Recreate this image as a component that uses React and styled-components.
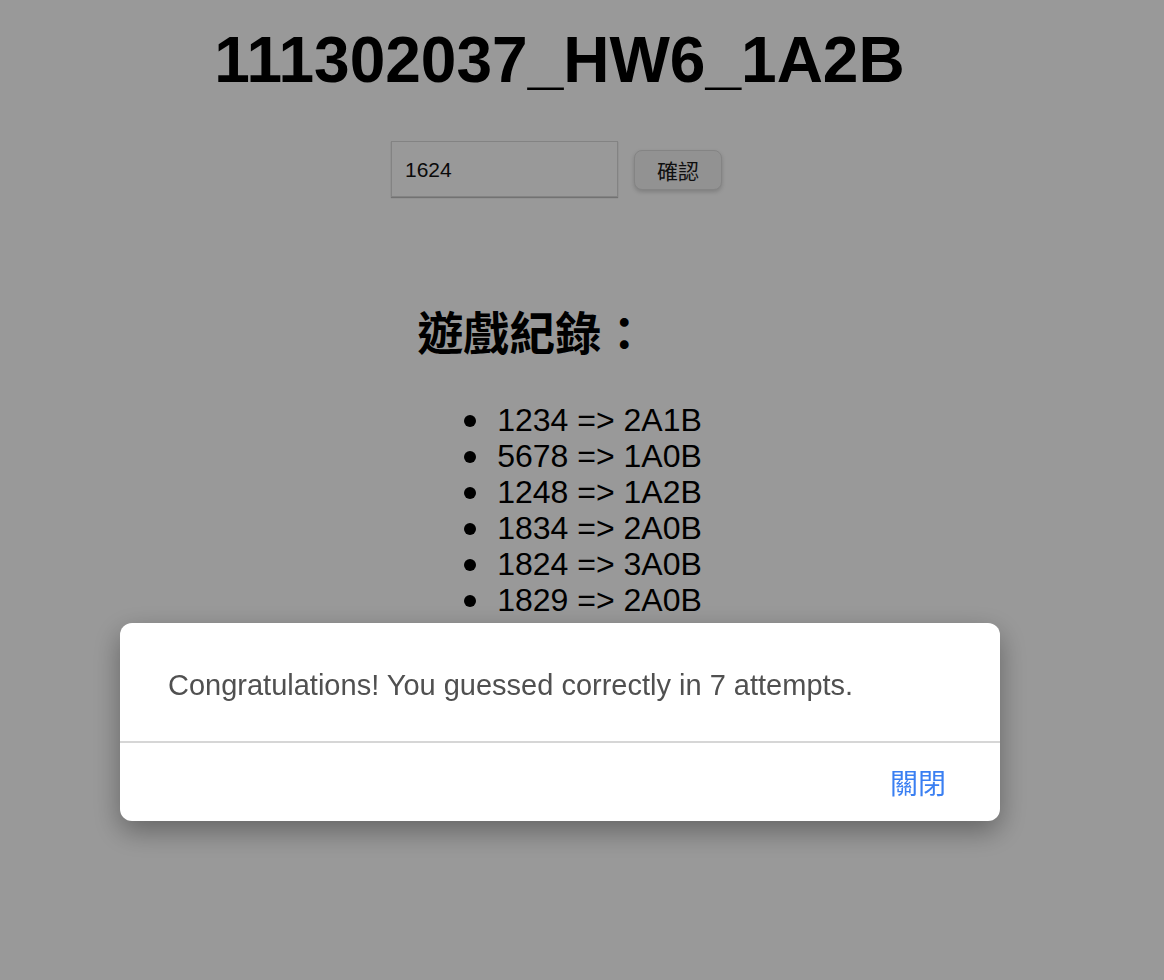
import React, { useState } from "react";
import styled, { createGlobalStyle } from "styled-components";

const Global = createGlobalStyle`
  html, body { margin: 0; padding: 0; background: #ffffff; }
  body { font-family: "Liberation Sans", Arial, "Noto Sans CJK TC", sans-serif; color: #000; }
`;

const Page = styled.div`
  width: 1119px;
  text-align: center;
  padding-top: 23px;
  min-height: 980px;
  box-sizing: border-box;
`;

const Title = styled.h1`
  margin: 0;
  font-size: 64px;
  line-height: 74px;
  font-weight: 700;
`;

const Form = styled.form`
  margin-top: 44px;
  display: flex;
  justify-content: center;
  align-items: center;
  gap: 16px;
  padding-right: 6px;
`;

const Input = styled.input`
  width: 227px;
  height: 56px;
  box-sizing: border-box;
  padding: 2px 13px 0;
  font-family: "Liberation Sans", Arial, sans-serif;
  font-size: 21px;
  color: #111;
  background: #fff;
  border: 1px solid #dadada;
  box-shadow: 0 1px 1px rgba(0, 0, 0, 0.25);
  outline: none;
`;

const Button = styled.button`
  width: 88px;
  height: 40px;
  border-radius: 8px;
  border: 1px solid #dcdcdc;
  background: #f4f4f4;
  box-shadow: 0 2px 4px rgba(0, 0, 0, 0.18);
  font-family: "Noto Sans CJK TC", sans-serif;
  font-size: 21px;
  line-height: 1;
  color: #1a1a1a;
  margin-top: 2px;
`;

const Records = styled.div`
  display: inline-block;
  text-align: left;
  margin-top: 105px;
`;

const RecordsTitle = styled.h2`
  margin: 0;
  font-family: "Noto Sans CJK TC", sans-serif;
  font-size: 46px;
  line-height: 56px;
  font-weight: 700;
`;

const List = styled.ul`
  margin: 44px 0 0;
  padding-left: 47px;
  list-style: none;
`;

const Item = styled.li`
  display: flex;
  align-items: center;
  gap: 21px;
  font-size: 32px;
  line-height: 36px;

  &::before {
    content: "";
    width: 12px;
    height: 12px;
    border-radius: 50%;
    background: #000;
    flex: none;
    margin-top: 2px;
  }
`;

const Backdrop = styled.div`
  position: fixed;
  inset: 0;
  background: rgba(0, 0, 0, 0.4);
`;

const Dialog = styled.div`
  position: fixed;
  left: 120px;
  top: 623px;
  width: 880px;
  background: #fff;
  border-radius: 12px;
  box-shadow: 0 10px 28px rgba(0, 0, 0, 0.35);
  display: flex;
  flex-direction: column;
  overflow: hidden;
`;

const DialogBody = styled.div`
  height: 120px;
  box-sizing: border-box;
  display: flex;
  align-items: center;
  padding: 6px 48px 0;
  font-family: "Liberation Sans", Arial, sans-serif;
  font-size: 29px;
  color: #505050;
  border-bottom: 2px solid #d6d6d6;
`;

const DialogFooter = styled.div`
  height: 78px;
  display: flex;
  align-items: center;
  justify-content: flex-end;
  padding-right: 54px;
`;

const CloseButton = styled.button`
  border: none;
  background: none;
  padding: 0;
  font-family: "Noto Sans CJK TC", sans-serif;
  font-size: 28px;
  color: #3a7ff2;
  cursor: pointer;
`;

const records = [
  "1234 => 2A1B",
  "5678 => 1A0B",
  "1248 => 1A2B",
  "1834 => 2A0B",
  "1824 => 3A0B",
  "1829 => 2A0B",
  "1624 => 4A0B",
];

export default function App() {
  const [open, setOpen] = useState(true);
  return (
    <>
      <Global />
      <Page>
        <Title>111302037_HW6_1A2B</Title>
        <Form onSubmit={(e) => e.preventDefault()}>
          <Input defaultValue="1624" />
          <Button type="submit">確認</Button>
        </Form>
        <Records>
          <RecordsTitle>遊戲紀錄：</RecordsTitle>
          <List>
            {records.map((r) => (
              <Item key={r}>{r}</Item>
            ))}
          </List>
        </Records>
      </Page>
      {open && (
        <>
          <Backdrop />
          <Dialog>
            <DialogBody>Congratulations! You guessed correctly in 7 attempts.</DialogBody>
            <DialogFooter>
              <CloseButton onClick={() => setOpen(false)}>關閉</CloseButton>
            </DialogFooter>
          </Dialog>
        </>
      )}
    </>
  );
}
